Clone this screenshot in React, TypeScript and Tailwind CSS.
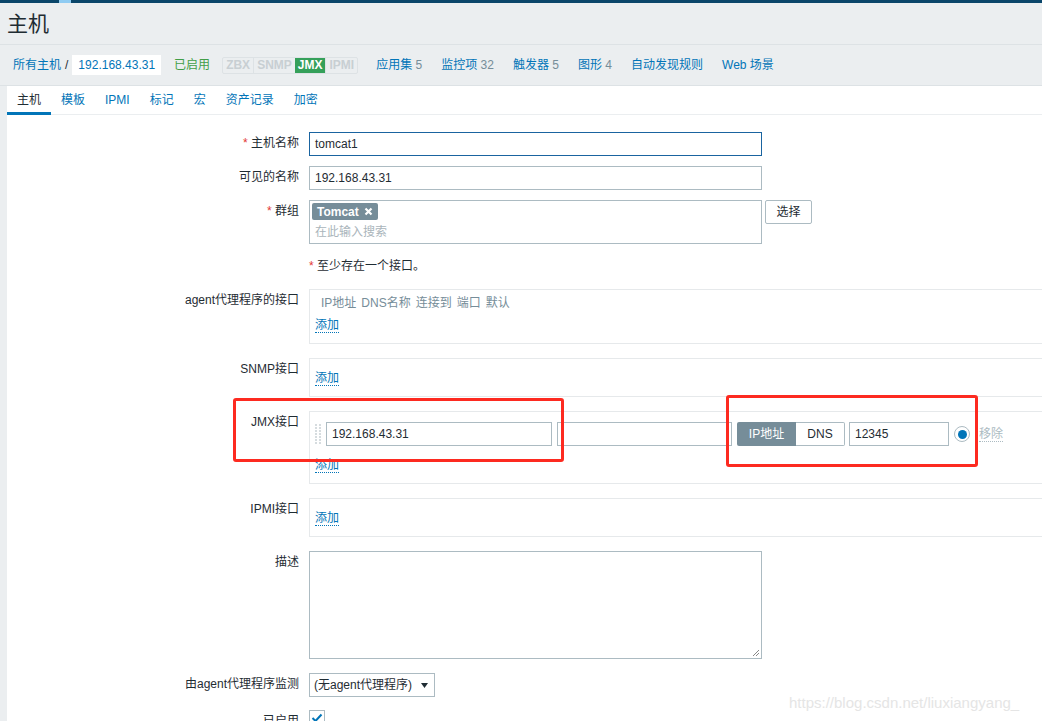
import React from "react";

function Add() {
  return (
    <span className="inline-block text-[#0275b8] border-b border-dotted border-[#0275b8] leading-[14px]">
      添加
    </span>
  );
}

function Row({
  label,
  req,
  mt,
  children,
}: {
  label: React.ReactNode;
  req?: boolean;
  mt: string;
  children: React.ReactNode;
}) {
  return (
    <div className={`flex ${mt}`}>
      <div className="w-[292px] shrink-0 text-right pt-[4px] leading-[14px]">
        {req && <span className="text-[#e33734]">* </span>}
        {label}
      </div>
      <div className="ml-[10px] flex-1 min-w-0">{children}</div>
    </div>
  );
}

function DragHandle() {
  const dots = [];
  for (let r = 0; r < 7; r++) {
    for (let c = 0; c < 2; c++) {
      dots.push(<rect key={`${r}-${c}`} x={c * 4} y={r * 3} width="2" height="2" fill="#d6dcdf" />);
    }
  }
  return (
    <svg width="6" height="20" viewBox="0 0 6 20" className="shrink-0">
      {dots}
    </svg>
  );
}

export default function App() {
  return (
    <div className="relative w-[1042px] h-[721px] overflow-hidden bg-[#ebeef0] text-[12px] leading-[14px] text-[#1f2c33] font-['Liberation_Sans','Noto_Sans_CJK_SC',sans-serif] flex flex-col">
      {/* top bar */}
      <div className="h-[3px] shrink-0 bg-[#0a466a] flex">
        <div className="ml-[59px] w-[12px] bg-[#8fcbf2]" />
      </div>
      {/* header */}
      <div className="h-[42px] shrink-0 flex items-center pt-[1px] px-[7px] border-b border-[#dde2e5]">
        <h1 className="text-[21px] leading-[24px] font-normal text-[#1f2c33]">主机</h1>
      </div>
      {/* nav row */}
      <div className="h-[41px] shrink-0 flex items-center pl-[13px] border-b border-[#dde2e5]">
        <span className="text-[#0275b8]">所有主机</span>
        <span className="ml-[4px] text-[#1f2c33]">/</span>
        <div className="ml-[4px] h-[20px] bg-white px-[6px] flex items-center text-[#0275b8]">192.168.43.31</div>
        <span className="ml-[13px] text-[#429e47]">已启用</span>
        <div className="ml-[12px] h-[17px] flex border border-[#dde2e5] rounded-[2px] text-[12px] font-bold leading-[15px]">
          <span className="px-[3px] text-[#c8cfd3] border-r border-[#dde2e5]">ZBX</span>
          <span className="px-[3px] text-[#c8cfd3]">SNMP</span>
          <span className="px-[3px] text-white bg-[#35a05a]">JMX</span>
          <span className="px-[3px] text-[#c8cfd3] border-l border-[#dde2e5]">IPMI</span>
        </div>
        <div className="ml-[18px] flex gap-[19px]">
          <span>
            <span className="text-[#0275b8]">应用集</span> <span className="text-[#768d99]">5</span>
          </span>
          <span>
            <span className="text-[#0275b8]">监控项</span> <span className="text-[#768d99]">32</span>
          </span>
          <span>
            <span className="text-[#0275b8]">触发器</span> <span className="text-[#768d99]">5</span>
          </span>
          <span>
            <span className="text-[#0275b8]">图形</span> <span className="text-[#768d99]">4</span>
          </span>
          <span className="text-[#0275b8]">自动发现规则</span>
          <span className="text-[#0275b8]">Web 场景</span>
        </div>
      </div>

      {/* white panel */}
      <div className="flex-1 ml-[7px] bg-white flex flex-col">
        {/* tabs */}
        <div className="h-[29px] shrink-0 flex border-b border-[#ebeef0]">
          <div className="h-[29px] -mb-px px-[10px] flex items-center border-b-[3px] border-[#0275b8] pt-[2px] text-[#1f2c33]">主机</div>
          <div className="h-[28px] px-[10px] flex items-center text-[#0275b8]">模板</div>
          <div className="h-[28px] px-[10px] flex items-center text-[#0275b8]">IPMI</div>
          <div className="h-[28px] px-[10px] flex items-center text-[#0275b8]">标记</div>
          <div className="h-[28px] px-[10px] flex items-center text-[#0275b8]">宏</div>
          <div className="h-[28px] px-[10px] flex items-center text-[#0275b8]">资产记录</div>
          <div className="h-[28px] px-[10px] flex items-center text-[#0275b8]">加密</div>
        </div>

        {/* form */}
        <div className="pt-[17px] flex flex-col">
          <Row label="主机名称" req mt="mt-0">
            <div className="w-[453px] h-[24px] border border-[#1a64a0] px-[5px] flex items-center">tomcat1</div>
          </Row>
          <Row label="可见的名称" mt="mt-[10px]">
            <div className="w-[453px] h-[24px] border border-[#acbbc2] px-[5px] flex items-center">192.168.43.31</div>
          </Row>
          <Row label="群组" req mt="mt-[10px]">
            <div className="flex">
              <div className="w-[453px] h-[44px] border border-[#acbbc2] pl-[2px] pt-[2px]">
                <div className="inline-flex items-center h-[17px] bg-[#768d99] rounded-[2px] pl-[5px] pr-[5px] text-white font-bold">
                  Tomcat
                  <svg width="9" height="9" viewBox="0 0 9 9" className="ml-[5px]">
                    <path d="M1.5 1.5 L7.5 7.5 M7.5 1.5 L1.5 7.5" stroke="#fff" strokeWidth="2.2" />
                  </svg>
                </div>
                <div className="pl-[3px] mt-[5px] text-[#aab5bb]">在此输入搜索</div>
              </div>
              <div className="ml-[3px] w-[47px] h-[24px] border border-[#acbbc2] rounded-[2px] flex items-center justify-center">选择</div>
            </div>
          </Row>
          <Row label="" mt="mt-[10px]">
            <div className="pt-[5px]">
              <span className="text-[#e33734]">*</span> 至少存在一个接口。
            </div>
          </Row>
          <Row label="agent代理程序的接口" mt="mt-[16px]">
            <div className="h-[55px] border-y border-l border-[#e6e9eb] pl-[5px] pt-[6px]">
              <div className="pl-[6px] text-[#768d99] flex gap-[5px]">
                <span>IP地址</span>
                <span>DNS名称</span>
                <span>连接到</span>
                <span>端口</span>
                <span>默认</span>
              </div>
              <div className="mt-[8px]">
                <Add />
              </div>
            </div>
          </Row>
          <Row label="SNMP接口" mt="mt-[14px]">
            <div className="h-[39px] border-y border-l border-[#e6e9eb] pl-[5px] pt-[12px]">
              <Add />
            </div>
          </Row>
          <Row label="JMX接口" mt="mt-[14px]">
            <div className="h-[73px] border-y border-l border-[#e6e9eb] pl-[5px] pt-[10px]">
              <div className="flex items-center h-[24px]">
                <DragHandle />
                <div className="ml-[5px] w-[226px] h-[24px] border border-[#acbbc2] px-[5px] flex items-center">192.168.43.31</div>
                <div className="ml-[5px] w-[175px] h-[24px] border border-[#acbbc2]" />
                <div className="ml-[5px] flex h-[24px]">
                  <div className="w-[59px] bg-[#768d99] text-white rounded-l-[2px] flex items-center justify-center">IP地址</div>
                  <div className="w-[49px] border border-l-0 border-[#acbbc2] rounded-r-[2px] flex items-center justify-center">DNS</div>
                </div>
                <div className="ml-[4px] w-[100px] h-[24px] border border-[#acbbc2] px-[5px] flex items-center">12345</div>
                <div className="ml-[5px] w-[16px] h-[16px] rounded-full border border-[#acbbc2] flex items-center justify-center">
                  <div className="w-[9px] h-[9px] rounded-full bg-[#0275b8]" />
                </div>
                <span className="ml-[9px] text-[#acbbc2] border-b border-dotted border-[#acbbc2]">移除</span>
              </div>
              <div className="mt-[12px]">
                <Add />
              </div>
            </div>
          </Row>
          <Row label="IPMI接口" mt="mt-[14px]">
            <div className="h-[39px] border-y border-l border-[#e6e9eb] pl-[5px] pt-[12px]">
              <Add />
            </div>
          </Row>
          <Row label="描述" mt="mt-[14px]">
            <div className="relative w-[453px] h-[108px] border border-[#acbbc2]">
              <svg width="9" height="9" viewBox="0 0 9 9" className="absolute right-[1px] bottom-[1px]">
                <path d="M8 2 L2 8 M8 5 L5 8" stroke="#888" strokeWidth="1" />
              </svg>
            </div>
          </Row>
          <Row label="由agent代理程序监测" mt="mt-[14px]">
            <div className="w-[126px] h-[24px] border border-[#acbbc2] pl-[4px] pr-[6px] flex items-center justify-between">
              <span>(无agent代理程序)</span>
              <svg width="7" height="7" viewBox="0 0 7 7">
                <path d="M0 1 L7 1 L3.5 6 Z" fill="#1f2c33" />
              </svg>
            </div>
          </Row>
          <Row label="已启用" mt="mt-[13px]">
            <div className="w-[16px] h-[16px] border border-[#acbbc2] flex items-center justify-center">
              <svg width="12" height="10" viewBox="0 0 12 10">
                <path d="M1.5 5 L4.5 8 L10.5 1.5" stroke="#0275b8" strokeWidth="2" fill="none" />
              </svg>
            </div>
          </Row>
        </div>
      </div>

      {/* red annotation boxes */}
      <div className="absolute left-[233px] top-[398px] w-[331px] h-[64px] border-[3px] border-[#fd2a20] rounded-[3px]" />
      <div className="absolute left-[726px] top-[395px] w-[252px] h-[72px] border-[3px] border-[#fd2a20] rounded-[3px]" />

      {/* watermark */}
      <div className="absolute left-[789px] top-[693px] text-[15px] leading-[20px] text-[#e5e5e5] font-['Liberation_Sans',sans-serif]">
        https://blog.csdn.net/liuxiangyang_
      </div>
    </div>
  );
}
